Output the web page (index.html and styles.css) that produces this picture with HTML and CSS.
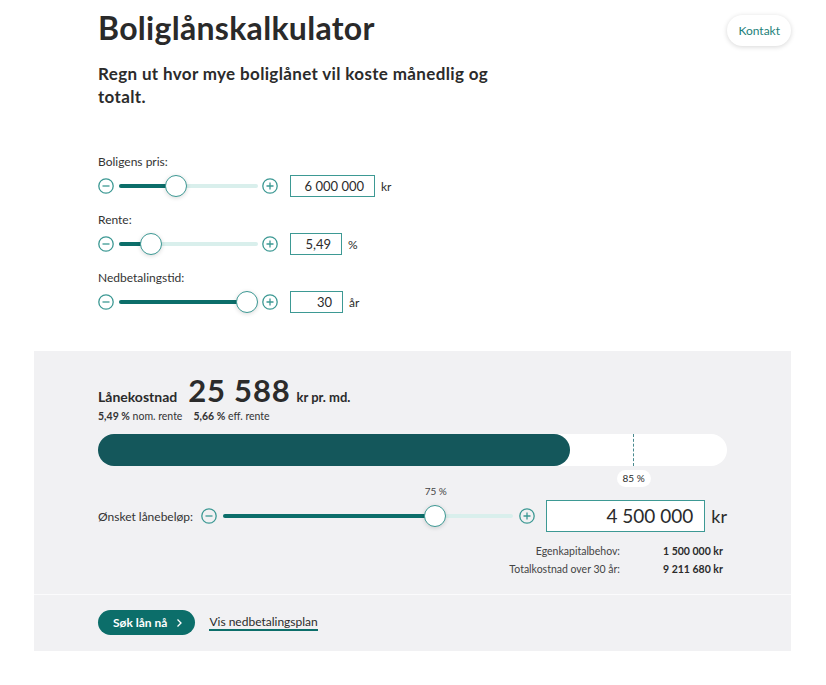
FILE: index.html
```html
<!DOCTYPE html>
<html lang="no">
<head>
<meta charset="utf-8">
<title>Boliglånskalkulator</title>
<link rel="stylesheet" href="styles.css">
</head>
<body>
<div class="page">
  <header class="header">
    <div class="intro">
      <h1 class="title">Boliglånskalkulator</h1>
      <p class="lead">Regn ut hvor mye boliglånet vil koste månedlig og totalt.</p>
    </div>
    <button class="contact">Kontakt</button>
  </header>

  <section class="inputs">
    <div class="field">
      <div class="label">Boligens pris:</div>
      <div class="row">
        <span class="btn-icon"><svg viewBox="0 0 16 16"><circle cx="8" cy="8" r="7.2"/><path d="M4.5 8h7"/></svg></span>
        <div class="track small"><div class="fill" style="width:41%"></div><div class="thumb" style="left:41%"></div></div>
        <span class="btn-icon"><svg viewBox="0 0 16 16"><circle cx="8" cy="8" r="7.2"/><path d="M4.5 8h7M8 4.5v7"/></svg></span>
        <div class="box w85">6 000 000</div><span class="unit">kr</span>
      </div>
    </div>
    <div class="field">
      <div class="label">Rente:</div>
      <div class="row">
        <span class="btn-icon"><svg viewBox="0 0 16 16"><circle cx="8" cy="8" r="7.2"/><path d="M4.5 8h7"/></svg></span>
        <div class="track small"><div class="fill" style="width:23%"></div><div class="thumb" style="left:23%"></div></div>
        <span class="btn-icon"><svg viewBox="0 0 16 16"><circle cx="8" cy="8" r="7.2"/><path d="M4.5 8h7M8 4.5v7"/></svg></span>
        <div class="box w52">5,49</div><span class="unit">%</span>
      </div>
    </div>
    <div class="field">
      <div class="label">Nedbetalingstid:</div>
      <div class="row">
        <span class="btn-icon"><svg viewBox="0 0 16 16"><circle cx="8" cy="8" r="7.2"/><path d="M4.5 8h7"/></svg></span>
        <div class="track small"><div class="fill" style="width:92%"></div><div class="thumb" style="left:92%"></div></div>
        <span class="btn-icon"><svg viewBox="0 0 16 16"><circle cx="8" cy="8" r="7.2"/><path d="M4.5 8h7M8 4.5v7"/></svg></span>
        <div class="box w53">30</div><span class="unit">år</span>
      </div>
    </div>
  </section>

  <section class="panel">
    <div class="result">
      <div class="cost">
        <span class="cost-label">Lånekostnad</span>
        <span class="cost-value">25 588</span>
        <span class="cost-unit">kr pr. md.</span>
      </div>
      <div class="rates"><span><b>5,49 %</b> nom. rente</span><span><b>5,66 %</b> eff. rente</span></div>

      <div class="bar">
        <div class="bar-fill" style="width:75%"></div>
        <div class="bar-mark" style="left:85%"><span class="bar-tag">85 %</span></div>
      </div>

      <div class="loan-row">
        <span class="loan-label">Ønsket lånebeløp:</span>
        <span class="btn-icon"><svg viewBox="0 0 16 16"><circle cx="8" cy="8" r="7.2"/><path d="M4.5 8h7"/></svg></span>
        <div class="track big"><div class="fill" style="width:73%"></div><div class="thumb" style="left:73%"><span class="thumb-tag">75 %</span></div></div>
        <span class="btn-icon"><svg viewBox="0 0 16 16"><circle cx="8" cy="8" r="7.2"/><path d="M4.5 8h7M8 4.5v7"/></svg></span>
        <div class="box large">4 500 000</div><span class="unit large-unit">kr</span>
      </div>

      <dl class="summary">
        <dt>Egenkapitalbehov:</dt><dd>1 500 000 kr</dd>
        <dt>Totalkostnad over 30 år:</dt><dd>9 211 680 kr</dd>
      </dl>
    </div>
    <div class="actions">
      <button class="apply">Søk lån nå <svg viewBox="0 0 8 10"><path d="M2.5 1.5 6 5 2.5 8.5"/></svg></button>
      <a class="plan" href="#">Vis nedbetalingsplan</a>
    </div>
  </section>
</div>
</body>
</html>
```

FILE: styles.css
```css
* { box-sizing: border-box; }
body {
  margin: 0;
  background: #fff;
  font-family: Lato, "Open Sans", Arial, sans-serif;
  color: #2b2b2b;
}
.page {
  width: 757px;
  margin-left: 34px;
}
.header {
  display: flex;
  justify-content: space-between;
  align-items: flex-start;
  padding-left: 64px;
}
.title {
  margin: 10px 0 0;
  font-size: 32px;
  font-weight: 700;
  letter-spacing: 0.3px;
  line-height: 36px;
  color: #2a2a2a;
}
.lead {
  margin: 16px 0 0;
  width: 410px;
  font-size: 17px;
  font-weight: 700;
  letter-spacing: 0.35px;
  line-height: 23px;
}
.contact {
  margin-top: 15px;
  height: 31px;
  padding: 0 11px;
  border: none;
  border-radius: 16px;
  background: #fff;
  box-shadow: 0 1px 5px rgba(0,0,0,0.16);
  color: #1d7f7a;
  font-family: inherit;
  font-size: 12px;
}
.inputs {
  padding: 47px 0 0 64px;
  height: 243px;
}
.field { margin-bottom: 16px; }
.label {
  font-size: 12px;
  line-height: 14px;
  color: #333;
  margin-bottom: 6px;
}
.row {
  display: flex;
  align-items: center;
  height: 22px;
}
.btn-icon {
  width: 16px;
  height: 16px;
  display: inline-flex;
  flex: none;
}
.btn-icon svg {
  width: 16px;
  height: 16px;
  fill: none;
  stroke: #3d9994;
  stroke-width: 1.3;
}
.track {
  position: relative;
  height: 4px;
  border-radius: 2px;
  background: #d9efec;
}
.track.small { width: 139px; margin: 0 4px 0 5px; }
.fill {
  height: 4px;
  border-radius: 2px;
  background: #0c6e6a;
}
.thumb {
  position: absolute;
  top: 50%;
  width: 22px;
  height: 22px;
  margin: -11px 0 0 -11px;
  border-radius: 50%;
  background: #fff;
  border: 1px solid #3d9994;
  box-shadow: 0 1px 4px rgba(0,0,0,0.15);
}
.box {
  height: 22px;
  margin-left: 12px;
  border: 1px solid #3d9994;
  background: #fff;
  font-size: 13px;
  line-height: 20px;
  text-align: right;
  padding-right: 10px;
}
.w85 { width: 85px; }
.w52 { width: 52px; }
.w53 { width: 53px; }
.unit {
  margin-left: 6px;
  font-size: 12px;
}
.panel {
  background: #f1f1f3;
}
.result {
  padding: 20px 64px 18px;
  border-bottom: 1px solid #fbfbfc;
}
.cost {
  display: flex;
  align-items: baseline;
  height: 38px;
}
.cost-label {
  font-size: 14px;
  font-weight: 700;
}
.cost-value {
  margin-left: 11px;
  font-size: 31px;
  font-weight: 700;
  letter-spacing: 0.8px;
}
.cost-unit {
  margin-left: 6px;
  font-size: 13px;
  font-weight: 700;
}
.rates {
  display: flex;
  gap: 11px;
  font-size: 10.5px;
  color: #333;
  line-height: 14px;
}
.rates b { font-weight: 700; }
.bar {
  position: relative;
  margin-top: 11px;
  height: 32px;
  border-radius: 16px;
  background: #fff;
}
.bar-fill {
  height: 32px;
  border-radius: 16px;
  background: #14575b;
}
.bar-mark {
  position: absolute;
  top: 0;
  height: 32px;
  border-left: 1px dashed #4a8a8f;
}
.bar-tag {
  position: absolute;
  top: 36px;
  left: -17px;
  width: 34px;
  height: 17px;
  border-radius: 9px;
  background: #fff;
  font-size: 10px;
  line-height: 17px;
  text-align: center;
}
.loan-row {
  display: flex;
  align-items: center;
  margin-top: 34px;
  height: 32px;
}
.loan-label {
  font-size: 12px;
  color: #333;
  margin-right: 8px;
  white-space: nowrap;
  flex: none;
}
.track.big { width: 290px; margin: 0 6px; flex: none; }
.thumb-tag {
  position: absolute;
  top: -21px;
  left: -6px;
  width: 34px;
  text-align: center;
  font-size: 10px;
  color: #444;
}
.box.large {
  width: 161px;
  height: 32px;
  margin-left: 11px;
  font-size: 19px;
  line-height: 30px;
  padding-right: 11px;
}
.large-unit {
  font-size: 18px;
  margin-left: 6px;
}
.summary {
  display: grid;
  grid-template-columns: 522px auto;
  column-gap: 43px;
  row-gap: 4px;
  margin: 12px 0 0;
  font-size: 10.5px;
  line-height: 14px;
}
.summary dt { text-align: right; color: #444; }
.summary dd { margin: 0; font-weight: 700; }
.actions {
  display: flex;
  align-items: center;
  padding: 15px 64px 16px;
  gap: 14px;
}
.apply {
  display: inline-flex;
  align-items: center;
  gap: 8px;
  height: 25px;
  padding: 0 12px 0 15px;
  border: none;
  border-radius: 13px;
  background: #0c6e6a;
  color: #fff;
  font-family: inherit;
  font-size: 12px;
  font-weight: 700;
}
.apply svg {
  width: 8px;
  height: 10px;
  fill: none;
  stroke: #fff;
  stroke-width: 1.3;
}
.plan {
  color: #2b2b2b;
  font-size: 12px;
  text-decoration: none;
  border-bottom: 2px solid #0c6e6a;
  line-height: 15px;
}
```
